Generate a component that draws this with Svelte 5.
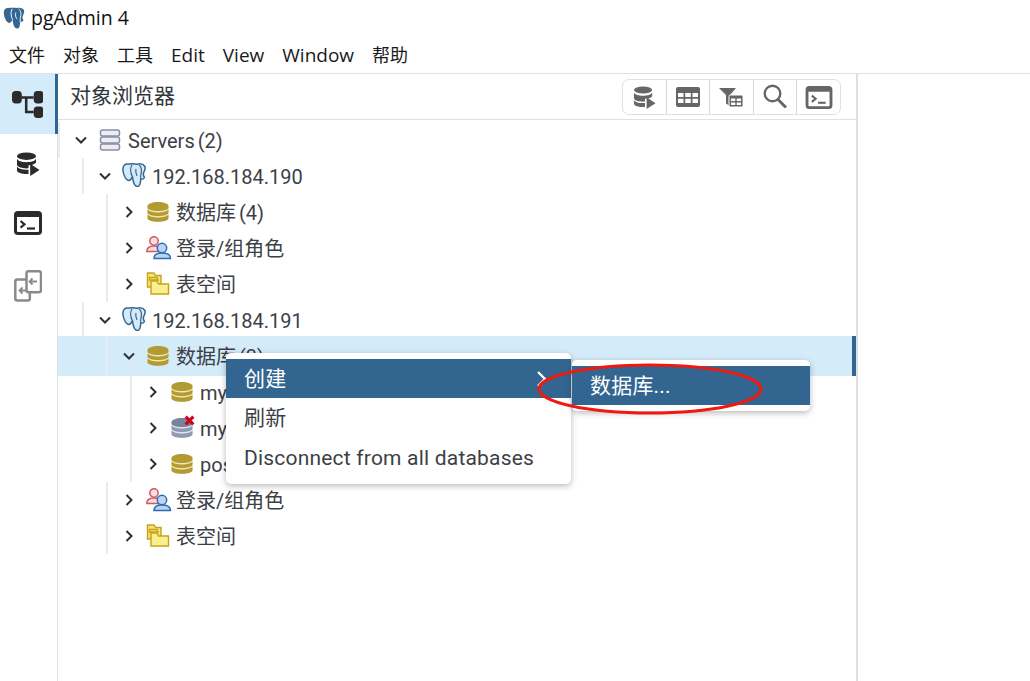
<script>
  const menus = [
    { t: '文件' }, { t: '对象' }, { t: '工具' },
    { t: 'Edit', lat: true }, { t: 'View', lat: true }, { t: 'Window', lat: true },
    { t: '帮助' }
  ];
  const rows = [
    { d: 0, open: true, icon: 'servers', label: 'Servers', count: '(2)' },
    { d: 1, open: true, icon: 'pg', label: '192.168.184.190' },
    { d: 2, icon: 'db', label: '数据库', count: '(4)' },
    { d: 2, icon: 'role', label: '登录/组角色' },
    { d: 2, icon: 'space', label: '表空间' },
    { d: 1, open: true, icon: 'pg', label: '192.168.184.191' },
    { d: 2, open: true, icon: 'db', label: '数据库', count: '(3)', selected: true },
    { d: 3, icon: 'db', label: 'mydb1' },
    { d: 3, icon: 'dbx', label: 'mydb2' },
    { d: 3, icon: 'db', label: 'postgres' },
    { d: 2, icon: 'role', label: '登录/组角色' },
    { d: 2, icon: 'space', label: '表空间' }
  ];
</script>

{#snippet pgPath()}
  <path d="M5 1C2 1 .5 4 1 8c.5 4 3 9.500 6 9.500 1.500 0 2.500-2.500 3.500-3.500.5 3 1 9.500 5 9.500 2.500 0 3-3.500 3.200-7 1.300 0 3.300-1 3.800-2-1-1.500-1.500-2.500-1-4.500 1-2 2-5 1.500-6.500C21 .8 17.500 .5 15 1.200 12 .5 9 1 5 1Z" />
{/snippet}

{#snippet dbStack(a, b, c)}
  <svg class="ic" viewBox="0 0 24 24">
    <path d="M1.500 6v12c0 2.300 4.700 3.800 10.500 3.800S22.500 20.300 22.500 18V6Z" fill={c} />
    <path d="M1.500 14.500c1.500 2 5.500 3 10.500 3s9-1 10.500-3v3.700c0 2-4.700 3.500-10.500 3.500S1.500 20.200 1.500 18.200Z" fill={b} />
    <path d="M1.500 9.500c1.500 2 5.500 3 10.500 3s9-1 10.500-3v3c0 2-4.700 3.500-10.500 3.500S1.500 14.500 1.500 12.500Z" fill={b} />
    <path d="M1.500 6C1.500 3.700 6.200 2 12 2s10.500 1.700 10.500 4v1.500c0 2-4.700 3.500-10.500 3.500S1.500 9.500 1.500 7.500Z" fill={a} />
  </svg>
{/snippet}

{#snippet darkDb()}
  <svg class="tool-db" viewBox="0 0 24 24" fill="currentColor">
    <ellipse cx="10.500" cy="4.200" rx="9.500" ry="3.700" />
    <path d="M1 6.800c1 2.400 5 3.400 9.500 3.400s8.500-1 9.500-3.400v3.800c-1 1.600-3.500 2.400-6 2.700l-1.500 0v3c-.7.100-1.300.1-2 .1-4.500 0-8.500-1-9.500-3.300Z" />
    <path d="M1 14.800c1.500 2 5 3 9.500 3 .7 0 1.300 0 2-.1v4.200c-.7.100-1.300.1-2 .1-4.500 0-9.500-1.300-9.500-3.500Z" />
    <path d="M14.200 11.800 23.500 18l-9.300 6Z" />
  </svg>
{/snippet}

{#snippet terminal()}
  <svg class="term" viewBox="0 0 28 24">
    <rect x="1.500" y="1.500" width="25" height="21" rx="2.500" fill="#fff" stroke="currentColor" stroke-width="3" />
    <rect x="1.500" y="1" width="25" height="5" rx="2" fill="currentColor" />
    <path d="m6.500 10 4 3.300-4 3.300" fill="none" stroke="currentColor" stroke-width="2.200" />
    <path d="M13 17.500h8" stroke="currentColor" stroke-width="2.200" />
  </svg>
{/snippet}

<div class="app">
  <header class="title">
    <svg class="logo" viewBox="0 0 24 24">
      <g fill="#336791">{@render pgPath()}</g>
      <path d="M10 2C8 5 8.500 10 10.500 14M17 2c3 2 3 6 1.700 11v3.500M14 6c-1 3 0 5 1 7" fill="none" stroke="#fff" stroke-width="1" />
    </svg>
    <span>pgAdmin 4</span>
  </header>

  <nav class="menubar">
    {#each menus as m}<span class:lat={m.lat}>{m.t}</span>{/each}
  </nav>

  <main class="body">
    <aside class="side">
      <div class="side-btn active">
        <svg class="tree-ic" viewBox="0 0 30 26" fill="#2b2b2b">
          <rect x="0" y="0" width="9.500" height="12" rx="3.500" />
          <rect x="21" y="0" width="9.500" height="12" rx="3.500" />
          <rect x="21" y="15" width="9.500" height="11" rx="3.500" />
          <path d="M9 5h12v2.500h-6V19h6v2.500h-8.500V7.500H9Z" />
        </svg>
      </div>
      <div class="side-btn dark">{@render darkDb()}</div>
      <div class="side-btn dark up">{@render terminal()}</div>
      <div class="side-btn">
        <svg class="diff" viewBox="0 0 28 32" fill="none" stroke="#8a8a8a" stroke-width="2.500">
          <rect x="1.300" y="9.500" width="14.500" height="21" rx="2" fill="#fff" />
          <rect x="12.500" y="1.300" width="14.500" height="21" rx="2" fill="#fff" />
          <path d="M23 11.500h-7m2.500-3-3 3 3 3M13 20.500H6m2.500-3-3 3 3 3" stroke-width="1.800" />
        </svg>
      </div>
    </aside>

    <section class="panel">
      <div class="panel-head">
        <span class="panel-title">对象浏览器</span>
        <div class="tools">
          <button>{@render darkDb()}</button>
          <button>
            <svg class="t-table" viewBox="0 0 24 20">
              <rect x="0" y="0" width="24" height="20" rx="2" fill="currentColor" />
              <path d="M2 6h5.500v4H2Zm7.200 0h5.600v4H9.200Zm7.300 0H22v4h-5.500ZM2 11.700h5.500V16H2Zm7.200 0h5.600V16H9.200Zm7.300 0H22V16h-5.500Z" fill="#fff" />
            </svg>
          </button>
          <button>
            <svg class="t-filter" viewBox="0 0 24 20">
              <path d="M0 1h17l-6 7v11l-4-2.500V8Z" fill="currentColor" />
              <rect x="10" y="8" width="14" height="12" rx="1.500" fill="currentColor" stroke="#fff" />
              <path d="M12 11.500h4.300v2.500H12Zm5.700 0H22v2.500h-4.300ZM12 15.500h4.300V18H12Zm5.700 0H22V18h-4.300Z" fill="#fff" />
            </svg>
          </button>
          <button>
            <svg class="t-search" viewBox="0 0 24 24" fill="none" stroke="currentColor">
              <circle cx="9.500" cy="9.500" r="7.800" stroke-width="2.400" />
              <path d="m15 15.500 8 8" stroke-width="3" />
            </svg>
          </button>
          <button>{@render terminal()}</button>
        </div>
      </div>

      <div class="tree">
        {#each rows as r}
          <div class="row" class:selected={r.selected}>
            <div class="cell d{r.d}">
              <svg class="chev" viewBox="0 0 14 14" fill="none" stroke="#2f3136" stroke-width="2">
                {#if r.open}<path d="m2 4.500 5 5 5-5" />{:else}<path d="m4.500 2 5 5-5 5" />{/if}
              </svg>
              <span class="icon">
                {#if r.icon === 'servers'}
                  <svg class="ic" viewBox="0 0 24 24" fill="#eceef3" stroke="#8a8ea3" stroke-width="1.500">
                    <rect x="2.500" y="2" width="19" height="6" rx="2" />
                    <rect x="2.500" y="9" width="19" height="6" rx="2" />
                    <rect x="2.500" y="16" width="19" height="6" rx="2" />
                  </svg>
                {:else if r.icon === 'pg'}
                  <svg class="ic pg" viewBox="0 0 24 24">
                    <g fill="#d6e9f7" stroke="#336791" stroke-width="1.500">{@render pgPath()}</g>
                    <path d="M10 2C8 5 8.500 10 10.500 14M17 2c3 2 3 6 1.700 11v3.500M14 6c-1 3 0 5 1 7" fill="none" stroke="#336791" stroke-width="1.200" />
                  </svg>
                {:else if r.icon === 'db'}
                  {@render dbStack('#b29a35', '#b29a35', '#efe5ae')}
                {:else if r.icon === 'dbx'}
                  {@render dbStack('#76849a', '#8e9bb0', '#dfe3ea')}
                  <svg class="cross" viewBox="0 0 10 10"><path d="m1.500 1.500 7 7m0-7-7 7" stroke="#d0021b" stroke-width="2.800" /></svg>
                {:else if r.icon === 'role'}
                  <svg class="ic-role" viewBox="0 0 26 24">
                    <g fill="#f8dede" stroke="#cf5b61" stroke-width="1.500">
                      <circle cx="8" cy="5" r="4.200" />
                      <path d="M.8 15.500c0-4 2.700-5.500 7.200-5.500s6 1.500 7 4v1.500Z" />
                    </g>
                    <g fill="#b9d5f2" stroke="#2e6db4" stroke-width="1.500">
                      <circle cx="16" cy="12" r="4.700" />
                      <path d="M8 22.500c0-4 3-5.500 8-5.500s8.500 1.500 8.500 5.500Z" />
                    </g>
                  </svg>
                {:else}
                  <svg class="ic" viewBox="0 0 24 24" stroke="#c8a415" stroke-width="1.400" fill="#f4e37e">
                    <path d="M1.500 1h6.500l1.500 2.500H15V15H1.500Z" />
                    <path d="M3.500 5.500H11l1 2.500H3.500Z" />
                    <path d="M5 9h6l1.500 3h10V22H5Z" fill="#f8f090" />
                  </svg>
                {/if}
              </span>
              <span class="label">{r.label}{#if r.count}<span class="count">{r.count}</span>{/if}</span>
            </div>
          </div>
        {/each}
      </div>
    </section>
    <div class="rest"></div>
  </main>

  <div class="menu">
    <div class="item on"><span>创建</span>
      <svg class="sub" viewBox="0 0 12 18" fill="none" stroke="#fff" stroke-width="2.400"><path d="m2 2 7 7-7 7" /></svg>
    </div>
    <div class="item">刷新</div>
    <div class="item">Disconnect from all databases</div>
  </div>
  <div class="menu submenu">
    <div class="item on">数据库...</div>
  </div>
  <svg class="ring" viewBox="0 0 230 56" fill="none"><ellipse cx="115" cy="28" rx="111" ry="24" stroke="#f01912" stroke-width="3" /></svg>
</div>

<style>
  :global(body) { margin: 0; background: #fff; }
  .app {
    position: relative;
    width: 1030px;
    height: 681px;
    overflow: hidden;
    display: flex;
    flex-direction: column;
    font-family: Roboto, "Noto Sans CJK SC", sans-serif;
    font-size: 20px;
    line-height: 26px;
    color: #3c3f46;
  }
  .title {
    height: 36px;
    display: flex;
    align-items: center;
    gap: 6px;
    padding-left: 3px;
    font-family: "Open Sans", "Noto Sans CJK SC", sans-serif;
    font-size: 19.5px;
    color: #111;
  }
  .logo { width: 22px; height: 24px; }
  .menubar {
    height: 38px;
    box-sizing: border-box;
    border-bottom: 1px solid #dfe1e5;
    display: flex;
    align-items: center;
    gap: 18px;
    padding-left: 9px;
    font-family: "Open Sans", "Noto Sans CJK SC", sans-serif;
    font-size: 18px;
    color: #1a1a1a;
  }
  .lat { font-size: 19px; }
  .body { flex: 1; display: flex; min-height: 0; }
  .side {
    width: 58px;
    flex: none;
    box-sizing: border-box;
    border-right: 1px solid #dfe1e5;
  }
  .side-btn {
    height: 60px;
    display: flex;
    align-items: center;
    justify-content: center;
    padding-right: 1px;
  }
  .side-btn.active {
    background: #d4ebfa;
    box-shadow: inset -3px 0 0 #326690;
    margin-right: -1px;
    padding-right: 4px;
  }
  .side-btn.dark { color: #2b2b2b; }
  .side-btn.up { padding-bottom: 2px; height: 58px; padding-top: 0; margin-bottom: 2px; }
  .tree-ic { width: 31px; height: 27px; }
  .side-btn .tool-db { width: 24px; height: 24px; }
  .side-btn .term { width: 28px; height: 24px; }
  .diff { width: 28px; height: 32px; }
  .panel {
    width: 800px;
    flex: none;
    box-sizing: border-box;
    border-right: 2px solid #dcdfe6;
    display: flex;
    flex-direction: column;
  }
  .panel-head {
    height: 46px;
    flex: none;
    box-sizing: border-box;
    border-bottom: 1px solid #dfe1e5;
    display: flex;
    align-items: center;
    justify-content: space-between;
    padding: 1px 15px 0 12px;
  }
  .panel-title { font-size: 21px; color: #33363c; margin-top: -2px; }
  .tools {
    display: flex;
    width: 219px;
    height: 36px;
    box-sizing: border-box;
    border: 1px solid #dde1e8;
    border-radius: 7px;
    color: #666;
  }
  .tools button {
    flex: 1;
    padding: 0;
    border: 0;
    border-right: 1px solid #d3d8e0;
    background: none;
    color: inherit;
    display: flex;
    align-items: center;
    justify-content: center;
  }
  .tools button:last-child { border-right: 0; }
  .tool-db { width: 23px; height: 23px; }
  .t-table { width: 24px; height: 20px; }
  .t-filter { width: 24px; height: 20px; }
  .t-search { width: 24px; height: 24px; margin-top: -3px; }
  .term { width: 28px; height: 23px; }
  .tree { padding-top: 2px; }
  .row { height: 36px; position: relative; }
  .row.selected {
    height: 40px;
    margin: -2px 0;
    background: #d4ebfa;
    box-shadow: inset -4px 0 0 #326690;
  }
  .cell {
    height: 36px;
    box-sizing: border-box;
    display: flex;
    align-items: center;
    border-left: 2px solid #e7ebf2;
  }
  .row.selected .cell { position: relative; top: 2px; }
  .d1 { margin-left: 24px; }
  .d2 { margin-left: 48px; }
  .d3 { margin-left: 72px; }
  .chev { width: 14px; height: 14px; margin-left: 14px; flex: none; }
  .icon {
    width: 24px;
    height: 24px;
    margin-left: 10px;
    flex: none;
    position: relative;
  }
  .ic { width: 24px; height: 24px; display: block; }
  .ic-role { width: 26px; height: 24px; display: block; }
  .pg { margin-top: -1px; }
  .cross { position: absolute; left: 14px; top: -1px; width: 11px; height: 11px; }
  .label { margin: 2px 0 0 6px; white-space: nowrap; color: #3c3f46; }
  .count { margin-left: 3px; }
  .menu {
    position: absolute;
    left: 226px;
    top: 353px;
    width: 345px;
    box-sizing: border-box;
    padding: 6px 0;
    background: #fff;
    border-radius: 5px;
    box-shadow: 0 2px 6px rgba(0, 0, 0, 0.28);
  }
  .submenu { left: 572px; top: 360px; width: 238px; }
  .item {
    height: 40px;
    box-sizing: border-box;
    padding: 0 18px;
    display: flex;
    align-items: center;
    justify-content: space-between;
    color: #3c3f46;
    font-size: 21px;
    letter-spacing: 0.2px;
  }
  .item.on { height: 39px; background: #326690; color: #fff; }
  .sub { width: 12px; height: 18px; margin-right: 5px; }
  .ring { position: absolute; left: 535px; top: 361px; width: 230px; height: 56px; }
</style>
